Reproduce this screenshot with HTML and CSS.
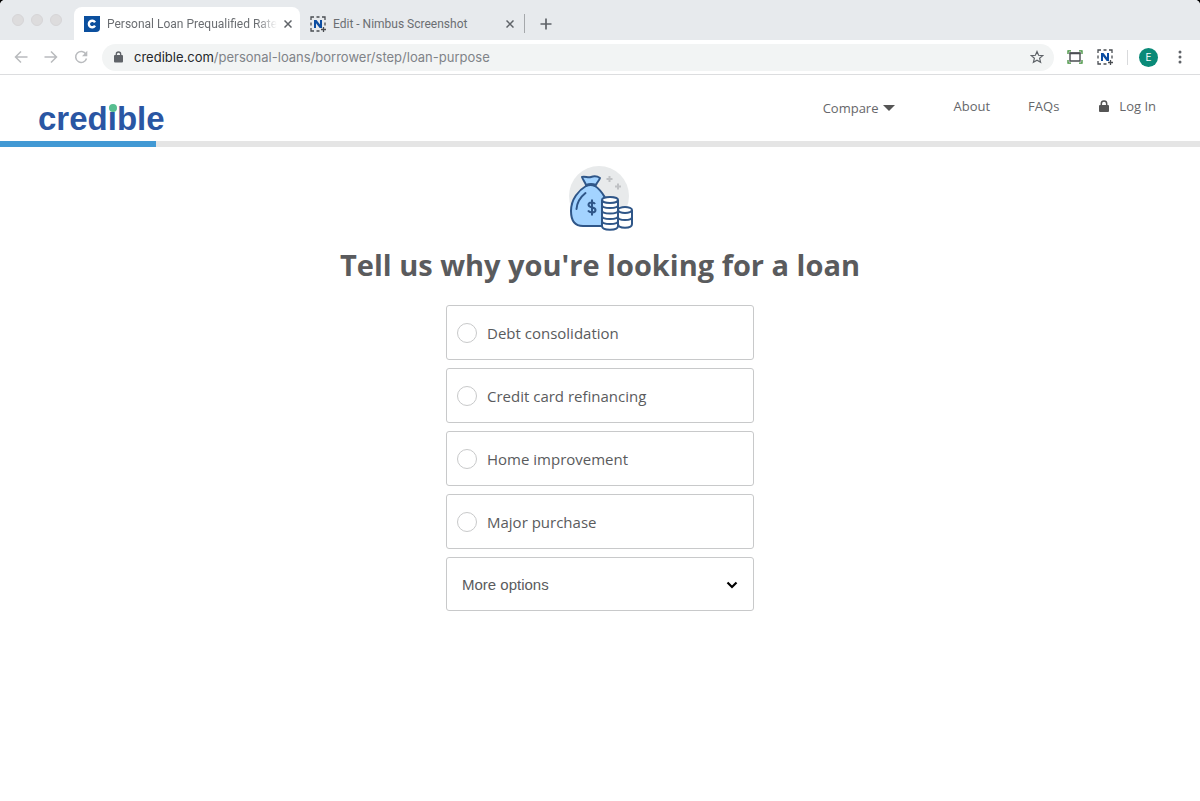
FILE: index.html
```
<!DOCTYPE html>
<html lang="en">
<head>
  <meta charset="UTF-8">
  <meta name="viewport" content="width=device-width, initial-scale=1.0">
  <title>Personal Loan Prequalified Rates</title>
  <link rel="stylesheet" href="styles.css">
</head>
<body>
  <div class="window">
    <div class="tab-strip">
      <div class="lights"><span></span><span></span><span></span></div>
      <div class="tab active">
        <svg width="16" height="16" viewBox="0 0 16 16">
          <path d="M0 0h16v12a4 4 0 0 1-4 4H0z" fill="#0b4f9e"/>
          <path d="M11 6.3A3.3 3.3 0 1 0 11 9.7" fill="none" stroke="#fff" stroke-width="2.4"/>
        </svg>
        <span class="tab-title">Personal Loan Prequalified Rate</span>
        <button class="icon-button" aria-label="Close tab">
          <svg width="8" height="8" viewBox="0 0 8 8"><path d="M.5.5l7 7M7.5.5l-7 7" stroke="#5f6368" stroke-width="1.5"/></svg>
        </button>
      </div>
      <div class="tab">
        <svg width="16" height="16" viewBox="0 0 16 16">
          <path d="M1 4V1h3M6.5 1h3M12 1h3v3M15 6.5v3M1 6.5v3M1 12v3h3M6.5 15h3" fill="none" stroke="#4a4d52" stroke-width="1.3"/>
          <path d="M4 12V4h2.5l3.500 4.500V4h2v8H9.700L6 7.300V12z" fill="#0b4da2"/>
          <path d="M13.5 11v5M11 13.5h5" stroke="#4a4d52" stroke-width="1.3"/>
        </svg>
        <span class="tab-title">Edit - Nimbus Screenshot</span>
        <button class="icon-button" aria-label="Close tab">
          <svg width="8" height="8" viewBox="0 0 8 8"><path d="M.5.5l7 7M7.5.5l-7 7" stroke="#5f6368" stroke-width="1.5"/></svg>
        </button>
      </div>
      <span class="tab-divider"></span>
      <button class="icon-button new-tab" aria-label="New tab">
        <svg width="12" height="12" viewBox="0 0 12 12"><path d="M6 .5v11M.5 6h11" stroke="#5f6368" stroke-width="1.7"/></svg>
      </button>
    </div>

    <div class="toolbar">
      <button class="icon-button" aria-label="Back">
        <svg width="14" height="14" viewBox="0 0 14 14"><path d="M13.5 7h-12M7 1.500L1.500 7 7 12.500" fill="none" stroke="#b9bbbe" stroke-width="1.5"/></svg>
      </button>
      <button class="icon-button" aria-label="Forward">
        <svg width="14" height="14" viewBox="0 0 14 14"><path d="M.5 7h12M7 1.500L12.500 7 7 12.500" fill="none" stroke="#b9bbbe" stroke-width="1.5"/></svg>
      </button>
      <button class="icon-button" aria-label="Reload">
        <svg width="14" height="14" viewBox="0 0 14 14">
          <path d="M12 4.300A5.500 5.500 0 1 0 12.500 8.500" fill="none" stroke="#b9bbbe" stroke-width="1.5"/>
          <path d="M13.300.8v5.400H8z" fill="#b9bbbe"/>
        </svg>
      </button>
      <div class="address">
        <svg width="9" height="12" viewBox="0 0 9 12">
          <path d="M2.300 5V3.200a2.200 2.200 0 0 1 4.400 0V5" fill="none" stroke="#5f6368" stroke-width="1.3"/>
          <rect y="4" width="9" height="7.5" rx="1" fill="#5f6368"/>
        </svg>
        <span class="url"><b>credible.com</b>/personal-loans/borrower/step/loan-purpose</span>
        <button class="icon-button" aria-label="Bookmark this page">
          <svg width="14" height="14" viewBox="0 0 14 14"><path d="M7 1.500l1.600 3.800 4.100.3-3.100 2.700 1 4L7 10.200l-3.600 2.100 1-4L1.300 5.600l4.100-.3z" fill="none" stroke="#5f6368" stroke-width="1.2"/></svg>
        </button>
      </div>
      <div class="extensions">
        <button class="icon-button" aria-label="Capture">
          <svg width="16" height="14" viewBox="0 0 16 14">
            <path d="M1 4V.8h3M12 .8h3V4M15 10v3.200h-3M4 13.200H1V10" fill="none" stroke="#3f8f3a" stroke-width="1.3"/>
            <path d="M3 3h10v8H3z" fill="#fff" stroke="#4a4d52" stroke-width="1.4"/>
            <path d="M2.500 3.300h11" stroke="#4a4d52" stroke-width="1.8"/>
          </svg>
        </button>
        <button class="icon-button" aria-label="Nimbus">
          <svg width="16" height="16" viewBox="0 0 16 16">
            <path d="M1 4V1h3M6.500 1h3M12 1h3v3M15 6.500v3M1 6.500v3M1 12v3h3M6.500 15h3" fill="none" stroke="#4a4d52" stroke-width="1.3"/>
            <path d="M4 12V4h2.500l3.500 4.500V4h2v8H9.700L6 7.300V12z" fill="#0b4da2"/>
            <path d="M13.500 11v5M11 13.500h5" stroke="#4a4d52" stroke-width="1.3"/>
          </svg>
        </button>
        <span class="toolbar-divider"></span>
        <button class="avatar">E</button>
      </div>
      <button class="icon-button" aria-label="Menu">
        <svg width="4" height="14" viewBox="0 0 4 14" fill="#5f6368"><circle cx="2" cy="2" r="1.5"/><circle cx="2" cy="7" r="1.5"/><circle cx="2" cy="12" r="1.5"/></svg>
      </button>
    </div>

    <header class="site-header">
      <a class="logo" href="#">cred<span class="logo-i">i</span>ble</a>
      <nav>
        <a class="compare" href="#">Compare
          <svg width="12" height="6" viewBox="0 0 12 6"><path d="M0 0h12L6 6z" fill="#555"/></svg>
        </a>
        <a class="about" href="#">About</a>
        <a class="faqs" href="#">FAQs</a>
        <a class="login" href="#">
          <svg width="10" height="12" viewBox="0 0 10 12">
            <path d="M2.300 6V3.700a2.700 2.700 0 0 1 5.400 0V6" fill="none" stroke="#555" stroke-width="1.5"/>
            <rect y="5" width="10" height="7" rx="1" fill="#555"/>
          </svg>
          Log In
        </a>
      </nav>
    </header>
    <progress class="step-progress" value="13" max="100" aria-label="Application progress"></progress>

    <main>
      <svg class="money" width="66" height="66" viewBox="0 0 66 66">
        <circle cx="32" cy="31" r="30" fill="#e8eaeb"/>
        <path d="M42.500 11v6M39.500 14h6M51 18.500v6M48 21.500h6" stroke="#bfc1c4" stroke-width="2"/>
        <g fill="#a3d3ff" stroke="#2f5688" stroke-width="2" stroke-linejoin="round">
          <path d="M19 21C12 25 4 34 4 46c0 11 5 15 12 15h18c7 0 8-4 8-14 0-11-8-22-14-26-3-1.500-6-1.500-9 0z"/>
          <path d="M19 20c-1-3-3-5-4-8 3-1 6 1 9 0s6-1 9 1c-1 3-3 4-4 7-3-1.300-7-1.300-10 0z"/>
        </g>
        <path d="M9.500 44c.5-7 4-12 9-16" fill="none" stroke="#2f5688" stroke-width="2" stroke-linecap="round"/>
        <path d="M28 39c-1-2-6.500-2.300-6.500.8 0 3.700 7 1.700 7 5.200 0 3.200-6 3-7.500.5M25 34.500v16" fill="none" stroke="#2f5688" stroke-width="2"/>
        <g fill="#fff" stroke="#2f5688" stroke-width="2">
          <path d="M51 45v14c0 5 14 5 14 0V45"/>
          <path d="M51 52c0 4 14 4 14 0" fill="none"/>
          <ellipse cx="58" cy="45" rx="7" ry="3"/>
          <path d="M35 35v26c0 5 16 5 16 0V35"/>
          <path d="M35 40c0 4 16 4 16 0M35 45.500c0 4 16 4 16 0M35 51c0 4 16 4 16 0M35 56c0 4 16 4 16 0" fill="none"/>
          <ellipse cx="43" cy="35" rx="8" ry="3"/>
        </g>
      </svg>
      <h1>Tell us why you're looking for a loan</h1>
      <form class="options">
        <label class="option"><input type="radio" name="purpose" value="debt">Debt consolidation</label>
        <label class="option"><input type="radio" name="purpose" value="credit-card">Credit card refinancing</label>
        <label class="option"><input type="radio" name="purpose" value="home">Home improvement</label>
        <label class="option"><input type="radio" name="purpose" value="purchase">Major purchase</label>
        <div class="more">
          <select aria-label="More options">
            <option>More options</option>
          </select>
          <svg class="chevron" width="12" height="8" viewBox="0 0 12 8"><path d="M1.500 1.500L6 6l4.500-4.500" fill="none" stroke="#000" stroke-width="2.2"/></svg>
        </div>
      </form>
    </main>
  </div>
</body>
</html>
```
FILE: styles.css
```
* {
  box-sizing: border-box;
}
body {
  margin: 0;
  background: #000;
  color: #5a5b5d;
  font-family: "Open Sans", sans-serif;
}
svg {
  flex: none;
}
.window {
  min-height: 100vh;
  overflow: hidden;
  background: #fff;
  border-radius: 5px 5px 0 0;
}
.icon-button {
  display: flex;
  padding: 0;
  border: none;
  background: none;
  cursor: pointer;
}

/* Browser tabs */
.tab-strip {
  display: flex;
  align-items: center;
  height: 40px;
  padding-top: 7px;
  background: #e7eaed;
  font-family: Roboto, sans-serif;
  font-size: 12px;
  color: #6b6e72;
}
.lights {
  display: flex;
  gap: 7px;
  width: 74px;
  padding: 0 0 7px 12px;
}
.lights span {
  width: 12px;
  height: 12px;
  border: 1px solid #d6d5d7;
  border-radius: 50%;
  background: #dddcdd;
}
.tab {
  display: flex;
  align-items: center;
  gap: 7px;
  width: 224px;
  height: 33px;
  padding: 0 10px;
}
.tab.active {
  width: 226px;
  border-radius: 8px 8px 0 0;
  background: #fff;
}
.tab-title {
  flex: 1;
  white-space: nowrap;
}
.active .tab-title {
  -webkit-mask-image: linear-gradient(to right, #000 88%, transparent);
  mask-image: linear-gradient(to right, #000 88%, transparent);
}
.tab-divider {
  width: 1px;
  height: 19px;
  background: #a5a8ab;
}
.new-tab {
  margin-left: 15px;
}

/* Address bar */
.toolbar {
  display: flex;
  align-items: center;
  gap: 16px;
  height: 35px;
  padding: 0 18px 0 14px;
  border-bottom: 1px solid #dcdddf;
  font-family: Inter, sans-serif;
}
.address {
  display: flex;
  flex: 1;
  align-items: center;
  gap: 11px;
  height: 27px;
  margin-left: -2px;
  padding: 0 10px 0 12px;
  border-radius: 14px;
  background: #f2f4f4;
  color: #808388;
  font-size: 13px;
}
.url {
  flex: 1;
}
.url b {
  color: #25272a;
  font-weight: 400;
}
.extensions {
  display: flex;
  align-items: center;
  gap: 14px;
  margin: 0 4px 0 -3px;
}
.toolbar-divider {
  width: 1px;
  height: 15px;
  margin-right: -3px;
  background: #d9dadc;
}
.avatar {
  width: 19px;
  height: 19px;
  padding: 0;
  border: none;
  border-radius: 50%;
  background: #0a8a78;
  color: #fff;
  font-family: Inter, sans-serif;
  font-size: 10px;
}

/* Site header */
.site-header {
  display: flex;
  align-items: center;
  justify-content: space-between;
  height: 66px;
  padding: 0 44px 0 38px;
}
.logo {
  padding-top: 22px;
  color: #2a56a3;
  font-family: "Liberation Sans", sans-serif;
  font-size: 33px;
  font-weight: 700;
  line-height: 40px;
  text-decoration: none;
}
.logo-i {
  position: relative;
}
.logo-i::before {
  content: "";
  position: absolute;
  top: 4px;
  left: 1px;
  width: 8px;
  height: 8px;
  border-radius: 50%;
  background: #57be90;
}
nav {
  display: flex;
  gap: 38px;
  padding-bottom: 4px;
  font-size: 13px;
  line-height: 20px;
}
nav a {
  display: flex;
  align-items: center;
  color: #66676a;
  text-decoration: none;
}
.compare {
  gap: 5px;
  margin-right: 20px;
  padding-top: 4px;
}
.login {
  gap: 10px;
  margin-left: 2px;
}
.step-progress {
  display: block;
  width: 100%;
  height: 6px;
  border: none;
  background: #e5e5e5;
  appearance: none;
}
.step-progress::-webkit-progress-bar {
  background: #e5e5e5;
}
.step-progress::-webkit-progress-value {
  background: #4299d4;
}

/* Loan purpose form */
main {
  display: flex;
  flex-direction: column;
  align-items: center;
  padding: 18px 16px 40px;
}
h1 {
  margin: 14px 0 20px;
  font-size: 29px;
  line-height: 40px;
}
.options {
  display: flex;
  flex-direction: column;
  gap: 8px;
  width: 100%;
  max-width: 308px;
}
.option {
  display: flex;
  align-items: center;
  gap: 10px;
  min-height: 55px;
  padding: 0 10px;
  border: 1px solid #c8c9ca;
  border-radius: 3px;
  font-size: 15px;
  cursor: pointer;
}
.option input {
  width: 20px;
  height: 20px;
  margin: 0;
  border: 1px solid #c8c9ca;
  border-radius: 50%;
  appearance: none;
}
.option input:checked {
  border: 6px solid #4299d4;
}
.more {
  position: relative;
}
.more select {
  display: block;
  width: 100%;
  height: 54px;
  padding: 0 15px;
  border: 1px solid #c8c9ca;
  border-radius: 3px;
  background: #fff;
  color: #5a5b5d;
  font-family: "Liberation Sans", sans-serif;
  font-size: 15px;
  appearance: none;
}
.chevron {
  position: absolute;
  top: 24px;
  right: 16px;
  pointer-events: none;
}
```
